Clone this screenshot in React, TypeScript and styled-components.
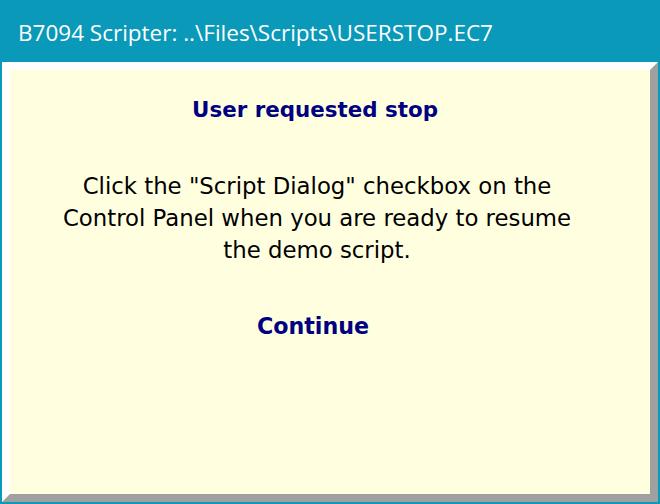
import React from "react";
import styled, { createGlobalStyle } from "styled-components";

const GlobalStyle = createGlobalStyle`
  html, body {
    margin: 0;
    padding: 0;
    width: 660px;
    height: 504px;
    overflow: hidden;
  }
`;

const Window = styled.div`
  box-sizing: border-box;
  width: 660px;
  height: 504px;
  display: flex;
  flex-direction: column;
  background: #0a99b8;
  border: 2px solid #0a99b8;
`;

const TitleBar = styled.div`
  height: 60px;
  display: flex;
  align-items: center;
  padding-left: 16px;
  color: #ffffff;
  font-family: "Open Sans", "Noto Sans", sans-serif;
  font-size: 22.5px;
  white-space: nowrap;
`;

const Panel = styled.div`
  flex: 1;
  box-sizing: border-box;
  display: flex;
  flex-direction: column;
  align-items: center;
  padding: 24px 26px 0 0;
  background: #ffffe0;
  border-style: solid;
  border-width: 8px;
  border-color: #ffffff #a0a0a0 #a0a0a0 #ffffff;
  font-family: "DejaVu Sans", Verdana, sans-serif;
`;

const Heading = styled.div`
  margin-right: 4px;
  color: #000080;
  font-weight: bold;
  font-size: 21.4px;
  line-height: 32px;
`;

const Message = styled.p`
  margin: 44px 0 0;
  color: #000000;
  font-size: 22.8px;
  line-height: 32px;
  text-align: center;
  white-space: nowrap;
`;

const ContinueButton = styled.button`
  margin: 44px 8px 0 0;
  padding: 0;
  border: none;
  background: none;
  color: #000080;
  font-family: inherit;
  font-weight: bold;
  font-size: 22.2px;
  line-height: 32px;
  cursor: pointer;
`;

export default function App() {
  return (
    <>
      <GlobalStyle />
      <Window>
        <TitleBar>B7094 Scripter: ..\Files\Scripts\USERSTOP.EC7</TitleBar>
        <Panel>
          <Heading>User requested stop</Heading>
          <Message>
            Click the "Script Dialog" checkbox on the
            <br />
            Control Panel when you are ready to resume
            <br />
            the demo script.
          </Message>
          <ContinueButton>Continue</ContinueButton>
        </Panel>
      </Window>
    </>
  );
}
